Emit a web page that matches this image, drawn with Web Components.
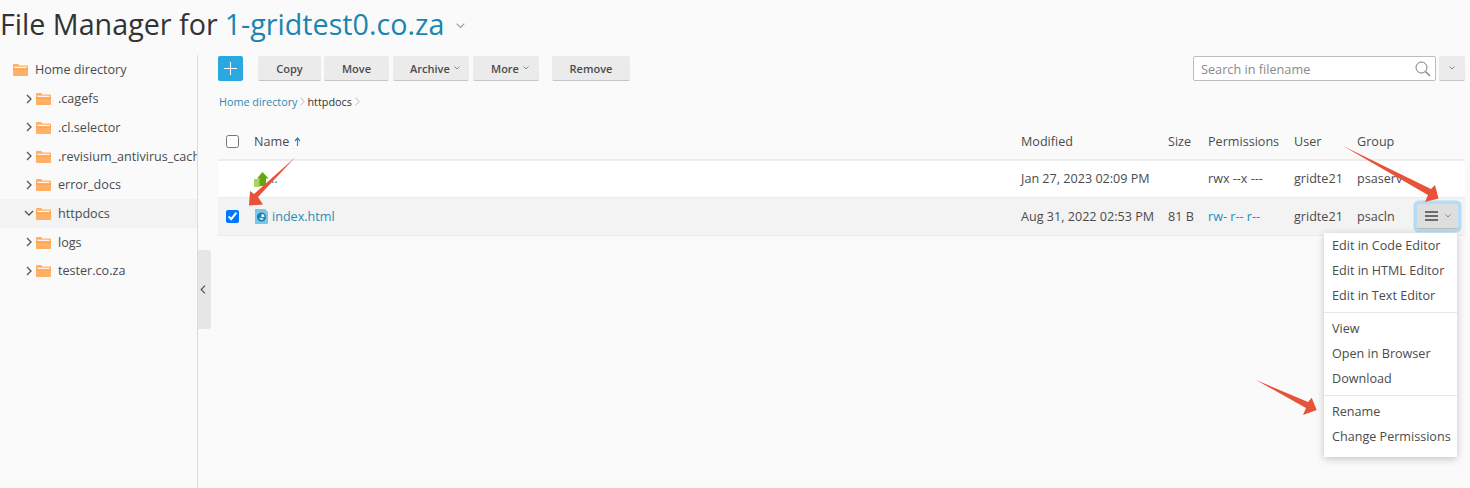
<!DOCTYPE html>
<html lang="en"><head><meta charset="utf-8"><title>File Manager</title>
<style>
html,body{margin:0;background:#fafafa;font-family:"Open Sans",sans-serif;color:#4b4b4b;font-size:12.6px}
body{height:488px;overflow:hidden}
</style></head><body>
<fm-app></fm-app>
<script>
const FOLDER=`<svg width="15" height="13" viewBox="0 0 16 14" preserveAspectRatio="none"><path d="M0 2a1 1 0 0 1 1-1h4.500l1.500 1.600h8a1 1 0 0 1 1 1V13a1 1 0 0 1-1 1H1a1 1 0 0 1-1-1z" fill="#ffb066"/><path d="M1.500 4h13v1.600H1.500z" fill="#fff" opacity=".85"/><path d="M0 6h16v1H0z" fill="#fb9d3f"/></svg>`;
const CHEV={right:`<svg width="8" height="10" viewBox="0 0 8 10"><path d="M2 1l4 4-4 4" fill="none" stroke="#555" stroke-width="1.300"/></svg>`,
down:`<svg width="10" height="8" viewBox="0 0 10 8"><path d="M1 2l4 4 4-4" fill="none" stroke="#555" stroke-width="1.300"/></svg>`};
const CARET=`<svg width="6" height="4" viewBox="0 0 6 4"><path d="M.5.5L3 3 5.500.5" fill="none" stroke="#888" stroke-width="1"/></svg>`;
function def(name,css,html){
  customElements.define(name,class extends HTMLElement{
    connectedCallback(){
      if(this.shadowRoot)return;
      const r=this.attachShadow({mode:"open"});
      r.innerHTML=`<style>${css}</style>`+(typeof html==="function"?html(this):html);
    }
  });
}
def("fm-title",`:host{display:flex;align-items:center;height:47px;font-size:28.7px;color:#333;white-space:nowrap;line-height:47px}
a{color:#1a85b0;text-decoration:none;margin-left:7px}svg{margin:5px 0 0 12px}`,
()=>`File Manager for<a>1-gridtest0.co.za</a><svg width="9" height="6" viewBox="0 0 9 6"><path d="M.7.7L4.500 4.500 8.300.7" fill="none" stroke="#999" stroke-width="1.100"/></svg>`);
def("fm-tree-item",`:host{display:flex;align-items:center;height:var(--h,28.67px);padding-left:var(--pad,21px);white-space:nowrap;overflow:hidden}
:host([active]){background:#f3f3f3}
.c{width:15px;display:flex;justify-content:center;flex:none}
.f{display:flex;margin-right:7px;flex:none}`,
h=>{const o=h.getAttribute("open")!==null,root=h.getAttribute("root")!==null;
 return (root?"":`<span class="c">${o?CHEV.down:CHEV.right}</span>`)+`<span class="f">${FOLDER}</span><slot></slot>`});
def("fm-tree",`:host{display:block;width:197px;flex:none;border-right:1px solid #dcdcdc;overflow:hidden}`,`<slot></slot>`);
def("fm-btn",`:host{display:inline-flex;align-items:center;justify-content:center;gap:4px;height:25px;box-sizing:border-box;background:#ebebeb;border-bottom:1px solid #c4c4c4;border-radius:2px;font-size:11px;font-weight:600;color:#4b4b4b;white-space:nowrap}`,`<slot></slot>`);
def("fm-toolbar",`:host{display:flex;align-items:center;height:25px;margin-top:1px}
.plus{width:25px;height:25px;background:#29a9df;border-radius:2px;display:flex;align-items:center;justify-content:center;margin-right:15px}
.s{flex:1}
.search{width:243px;height:25px;box-sizing:border-box;border:1px solid #bdbdbd;border-radius:2px;background:#fff;display:flex;align-items:center;padding:0 4px 0 7px;color:#8a8a8a;font-size:12.7px;margin-right:3px}
.search span{flex:1}`,
()=>`<div class="plus"><svg width="13" height="13" viewBox="0 0 13 13"><path d="M6.500 0v13M0 6.500h13" stroke="#fff" stroke-width="1.100"/></svg></div>
<fm-btn style="width:63px;margin-right:3px">Copy</fm-btn><fm-btn style="width:65px;margin-right:4px">Move</fm-btn><fm-btn style="width:76px;margin-right:4px;justify-content:flex-start;padding-left:17px">Archive ${CARET}</fm-btn><fm-btn style="width:66px;margin-right:13px;justify-content:flex-start;padding-left:18px">More ${CARET}</fm-btn><fm-btn style="width:78px">Remove</fm-btn>
<div class="s"></div>
<div class="search"><span>Search in filename</span><svg width="16" height="16" viewBox="0 0 16 16"><circle cx="6.500" cy="6.500" r="5.500" fill="none" stroke="#777"/><path d="M10.500 10.500L15 15" stroke="#888" stroke-width="1.600"/></svg></div>
<fm-btn style="width:26px">${CARET}</fm-btn>`);
def("fm-crumbs",`:host{display:flex;align-items:center;gap:3px;height:18px;margin-top:11px;padding-left:1px;font-size:10.800px;color:#333;white-space:nowrap}
a{color:#2a8bb5}span{margin-left:-1px}`,
()=>{const s=`<svg width="5" height="9" viewBox="0 0 5 9"><path d="M.7.7l3.500 3.800L.7 8.300" fill="none" stroke="#bbb"/></svg>`;
 return `<a>Home directory</a>${s}<span>httpdocs</span>${s}`});
const COLS="36px 767px 147px 40px 86px 63px 58px 50px";
def("fm-row",`:host{display:grid;grid-template-columns:${COLS};align-items:center;height:var(--h,36.67px);box-sizing:border-box;border-bottom:1px solid #ececec;background:var(--bg,#fff);white-space:nowrap}
input{margin:0 0 0 7.500px;width:13px;height:13px;display:block}
.n{display:flex;align-items:center;gap:3px}
a{color:#2a8bb5}
.act{display:flex;align-items:center;justify-content:center;gap:7px;width:41px;height:25px;margin-left:2px;box-sizing:border-box;background:#dedede;border-bottom:1px solid #bdbdbd;border-radius:2px;box-shadow:0 0 0 3.500px #b5dcf7}`,
h=>{const a=n=>h.getAttribute(n)||"";const sel=a("kind")==="file";
 return `<div>${sel?'<input type="checkbox" checked aria-label="Select">':''}</div>
 <div class="n">${sel?`<svg style="margin-left:1px" width="13" height="15" viewBox="0 0 13 15"><path d="M0 0H10l3 3v12H0z" fill="#7cc6ea"/><circle cx="6.500" cy="8" r="4.500" fill="#1c7fb0"/><path d="M6.500 5v3h3A3 3 0 0 0 6.500 5z" fill="#fff"/><path d="M4 9.500a3 3 0 0 0 5 .2L6 8.500z" fill="#bfe4f6"/></svg><a style="margin-left:1px">index.html</a>`:`<svg width="17" height="16" viewBox="0 0 17 16"><path d="M0 8h6v8H0z" fill="#a7d65a"/><path d="M8.500 1l6 6.500H12V15H5.500V7.500H3z" fill="#63a60f"/></svg><span style="margin-left:-3px;color:#2a8bb5">..</span>`}</div>
 <div>${a("mod")}</div><div>${a("size")}</div>
 <div>${sel?`<a>${a("perm")}</a>`:a("perm")}</div><div>${a("user")}</div><div>${a("group")}</div>
 <div>${sel?`<div class="act"><svg width="13" height="10" viewBox="0 0 13 10"><path d="M0 1h13M0 5h13M0 9h13" stroke="#444" stroke-width="1.600"/></svg>${CARET}</div>`:""}</div>`});
def("fm-head",`:host{display:grid;grid-template-columns:${COLS};align-items:center;height:40px;margin-top:11px;padding-top:3px;border-bottom:2px solid #ececec;box-sizing:border-box;white-space:nowrap}
input{margin:0 0 0 7.500px;width:13px;height:13px;display:block}
svg{margin-left:5px}`,
()=>`<div><input type="checkbox" aria-label="Select all"></div><div>Name<svg width="7" height="9" viewBox="0 0 7 9"><path d="M3.500 9V1.500M1 4l2.500-3L6 4" fill="none" stroke="#2a8bb5" stroke-width="1.200"/></svg></div><div>Modified</div><div>Size</div><div>Permissions</div><div>User</div><div>Group</div><div></div>`);
def("fm-menu",`:host{position:absolute;left:1324px;top:233px;width:133px;background:#fff;box-shadow:0 2px 8px rgba(0,0,0,.22);padding-bottom:8px;white-space:nowrap}`,`<slot></slot>`);
def("fm-menu-item",`:host{display:flex;align-items:center;height:25px;padding-left:8px}`,`<slot></slot>`);
def("fm-sep",`:host{display:block;border-top:1px solid #e8e8e8;margin:3.500px 0}`,``);
def("fm-arrows",`:host{position:absolute;left:0;top:0;width:1470px;height:488px;pointer-events:none;z-index:5}
svg{display:block}`,
`<svg width="1470" height="488" viewBox="0 0 1470 488"><g fill="#e8523a">
<polygon points="295.500,157 258,197 263,204.500 249,205.500 250,191 254,194"/>
<polygon points="1343,146 1431,189 1435,185 1438.500,198.500 1425,202 1428,195"/>
<polygon points="1256,380 1308,402 1311.700,397.700 1316.700,410 1303,415 1306,408"/>
</g></svg>`);
def("fm-app",`:host{display:block;position:relative;width:1470px;height:488px;overflow:hidden}
.body{display:flex;height:433px;margin-top:8px}
.handle{flex:none;width:13px;height:79px;margin-top:195px;background:#e6e6e6;border-radius:0 3px 3px 0;display:flex;align-items:center;justify-content:center}
.handle svg{margin-right:3px}
main{flex:1;min-width:0;padding:0 5px 0 7px}`,
`<fm-title></fm-title>
<div class="body">
<fm-tree>
<fm-tree-item root style="--pad:13px;--h:29.500px">Home directory</fm-tree-item>
<fm-tree-item>.cagefs</fm-tree-item>
<fm-tree-item>.cl.selector</fm-tree-item>
<fm-tree-item>.revisium_antivirus_cache</fm-tree-item>
<fm-tree-item>error_docs</fm-tree-item>
<fm-tree-item open active>httpdocs</fm-tree-item>
<fm-tree-item>logs</fm-tree-item>
<fm-tree-item>tester.co.za</fm-tree-item>
</fm-tree>
<div class="handle"><svg width="6" height="9" viewBox="0 0 6 9"><path d="M5 .7L1.200 4.500 5 8.300" fill="none" stroke="#555" stroke-width="1.200"/></svg></div>
<main>
<fm-toolbar></fm-toolbar>
<fm-crumbs></fm-crumbs>
<fm-head></fm-head>
<fm-row kind="up" mod="Jan 27, 2023 02:09 PM" perm="rwx --x ---" user="gridte21" group="psaserv"></fm-row>
<fm-row kind="file" style="--bg:#f3f3f3;--h:38px" mod="Aug 31, 2022 02:53 PM" size="81 B" perm="rw- r-- r--" user="gridte21" group="psacln"></fm-row>
</main>
</div>
<fm-menu>
<fm-menu-item>Edit in Code Editor</fm-menu-item><fm-menu-item>Edit in HTML Editor</fm-menu-item><fm-menu-item>Edit in Text Editor</fm-menu-item>
<fm-sep></fm-sep>
<fm-menu-item>View</fm-menu-item><fm-menu-item>Open in Browser</fm-menu-item><fm-menu-item>Download</fm-menu-item>
<fm-sep></fm-sep>
<fm-menu-item>Rename</fm-menu-item><fm-menu-item>Change Permissions</fm-menu-item>
</fm-menu>
<fm-arrows></fm-arrows>`);
</script></body></html>
